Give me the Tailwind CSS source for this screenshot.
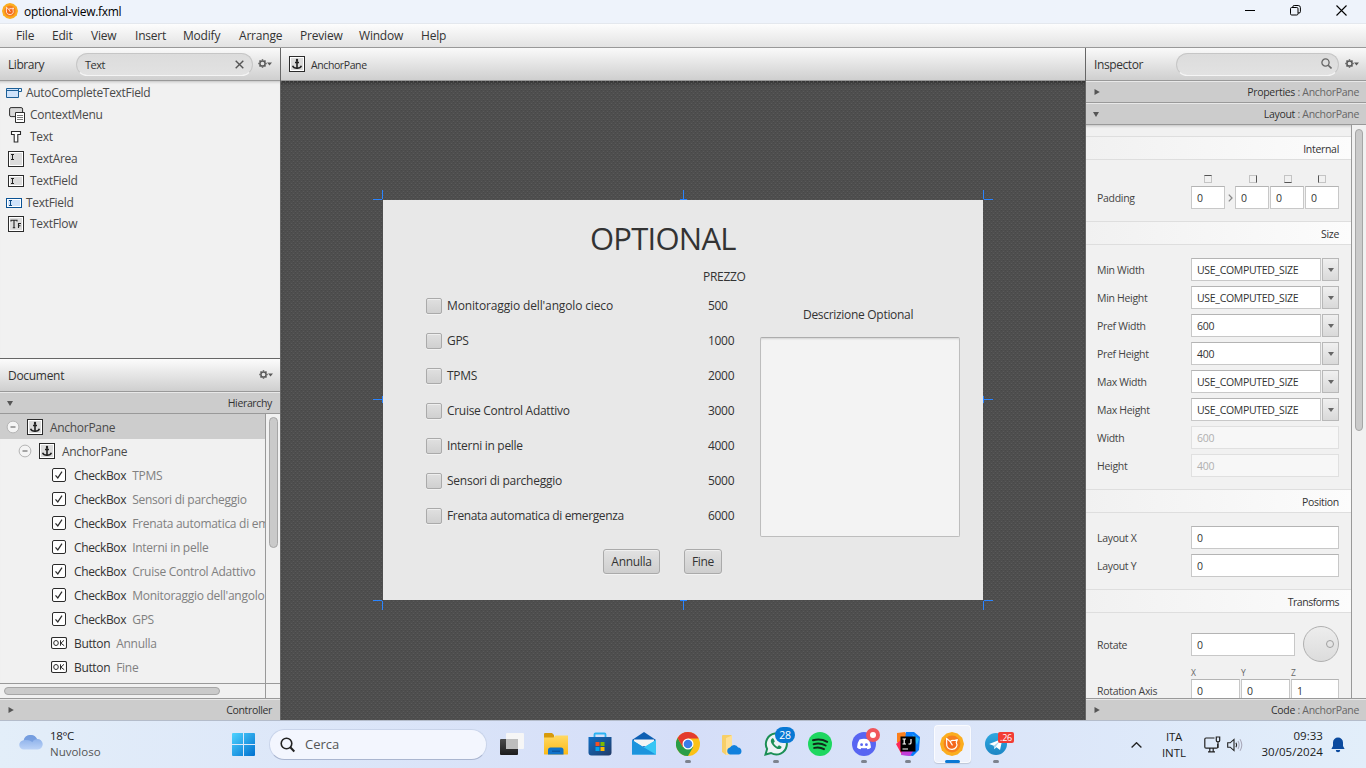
<!DOCTYPE html>
<html lang="it">
<head>
<meta charset="utf-8">
<title>optional-view.fxml</title>
<script src="https://cdn.jsdelivr.net/npm/@tailwindcss/browser@4"></script>
</head>
<body class="w-[1366px] h-[768px] overflow-hidden flex flex-col bg-[#f1f1f1] text-[12px] leading-none tracking-[-0.3px] text-[#333] font-['Open_Sans',sans-serif] whitespace-nowrap">

<svg class="absolute w-0 h-0">
  <defs>
    <linearGradient id="win" x1="0" y1="0" x2="1" y2="1"><stop offset="0" stop-color="#4fd3ff"/><stop offset="1" stop-color="#0070cf"/></linearGradient>
    <linearGradient id="cloud" x1="0" y1="0" x2="0" y2="1"><stop offset="0" stop-color="#7ea6e6"/><stop offset="1" stop-color="#bcd3f7"/></linearGradient>
    <linearGradient id="fold" x1="0" y1="0" x2="0" y2="1"><stop offset="0" stop-color="#ffd964"/><stop offset="1" stop-color="#fbb916"/></linearGradient>
    <linearGradient id="store" x1="0" y1="0" x2="1" y2="1"><stop offset="0" stop-color="#0f6fc6"/><stop offset="1" stop-color="#223a66"/></linearGradient>
    <linearGradient id="dark" x1="0" y1="0" x2="0" y2="1"><stop offset="0" stop-color="#4a4a4a"/><stop offset="1" stop-color="#1c1c1c"/></linearGradient>
    <linearGradient id="tg" x1="0" y1="0" x2="0" y2="1"><stop offset="0" stop-color="#2fa8e0"/><stop offset="1" stop-color="#1c86c4"/></linearGradient>
    <symbol id="gear" viewBox="0 0 14 10">
      <path d="M4.5 .3v1.2M4.5 7.5v1.2M.3 4.5h1.2M7.5 4.5h1.2M1.5 1.5l.9.9M6.6 6.6l.9.9M7.5 1.5l-.9.9M2.4 6.6l-.9.9" stroke="#5a5a5a" stroke-width="1.5"/>
      <circle cx="4.5" cy="4.5" r="2.6" fill="none" stroke="#5a5a5a" stroke-width="1.5"/>
      <path d="M9 3.4h5L11.5 6.4z" fill="#5a5a5a"/>
    </symbol>
    <symbol id="anchor" viewBox="0 0 16 16">
      <rect x=".5" y=".5" width="15" height="15" fill="#fff" stroke="#2b2b2b"/>
      <rect x="2" y="2" width="12" height="12" fill="#dcdcdc"/>
      <path d="M8 4v9M6 6.5h4" stroke="#222" stroke-width="1.6" fill="none"/>
      <circle cx="8" cy="4" r="1.2" fill="#222"/>
      <path d="M3.6 9.8c.5 1.7 2 2.400 4.400 2.400s3.900-.7 4.400-2.400" fill="none" stroke="#222" stroke-width="1.5"/>
    </symbol>
    <symbol id="check" viewBox="0 0 16 16">
      <rect x="1.500" y="1.500" width="13" height="13" rx="1.500" fill="#fff" stroke="#2b2b2b"/>
      <path d="M4.500 8.300l2.300 2.600L11 4.700" fill="none" stroke="#2b2b2b" stroke-width="1.200"/>
    </symbol>
    <symbol id="okbtn" viewBox="0 0 16 16">
      <rect x=".5" y="2.500" width="15" height="11" rx="1.500" fill="#fff" stroke="#2b2b2b" stroke-width="1.100"/>
      <ellipse cx="5" cy="8" rx="2.300" ry="2.500" fill="none" stroke="#2b2b2b"/>
      <path d="M9.500 5.300v5.400M13 5.300L9.900 8.200 13.200 10.700" fill="none" stroke="#2b2b2b"/>
    </symbol>
    <symbol id="minus" viewBox="0 0 14 14">
      <circle cx="7" cy="7" r="5.900" fill="#f4f4f4" stroke="#b4b4b4"/><path d="M4.500 7h5" stroke="#555" stroke-width="1"/>
    </symbol>
    <symbol id="duke" viewBox="0 0 24 24">
      <path d="M12 0L17.500 1.600 22.200 5.800 24 12 22.200 18.200 17.500 22.400 12 24 6.500 22.400 1.800 18.200 0 12 1.800 5.800 6.500 1.600z" fill="#fbad1f"/>
      <circle cx="12" cy="12" r="8.400" fill="#f6801f"/>
      <path d="M6.600 6.400l3.600 3.200c1-1 2.600-1.400 3.900-1.100l3.300-.9-1.200 2.700c1.800 3.200-.1 6.700-3.900 7-3.700.2-6-2.100-5.600-5.500z" fill="#f4661c" stroke="#fff" stroke-width="1.200" stroke-linejoin="round"/>
      <path d="M10.200 9.600l2.300 3.800" fill="none" stroke="#fff" stroke-width="1.100"/>
    </symbol>
  </defs>
</svg>

<!-- Title bar -->
<header class="h-[24px] shrink-0 flex items-center bg-[#eef3fb] text-black border-b border-[#e4e8ee]">
  <svg class="w-4 h-4 ml-[2px] mb-px"><use href="#duke"/></svg>
  <span class="ml-[6px] pt-px">optional-view.fxml</span>
  <div class="ml-auto flex items-center mr-[19px] pb-[3px]">
    <svg class="w-[11px] h-[11px]" viewBox="0 0 11 11"><path d="M0 5.500h10" stroke="#000"/></svg>
    <svg class="w-[11px] h-[11px] ml-[34px]" viewBox="0 0 11 11" fill="none" stroke="#000"><rect x=".5" y="2.500" width="7.500" height="7.500" rx="1.200"/><path d="M2.800 2.300V1.900q0-1.400 1.400-1.400h4q2.200 0 2.200 2.200v4q0 1.300-1.400 1.300H8"/></svg>
    <svg class="w-[11px] h-[11px] ml-[35px]" viewBox="0 0 11 11"><path d="M.5.500l10 10M10.500.5l-10 10" stroke="#000" stroke-width="1.100"/></svg>
  </div>
</header>

<!-- Menu bar -->
<nav class="h-[24px] shrink-0 flex items-center bg-linear-to-b from-[#fdfdfd] to-[#e3e3e3] border-b border-[#999] pl-4 pt-px tracking-[-0.2px]">
  <span class="w-9">File</span><span class="w-[39px]">Edit</span><span class="w-11">View</span><span class="w-12">Insert</span><span class="w-14">Modify</span><span class="w-[61px]">Arrange</span><span class="w-[59px]">Preview</span><span class="w-[62px]">Window</span><span>Help</span>
</nav>

<main class="flex-1 min-h-0 flex">
  <!-- Left column -->
  <aside class="w-[281px] shrink-0 flex flex-col border-r border-[#666]">
    <div class="h-[33px] shrink-0 flex items-center bg-linear-to-b from-[#fafafa] to-[#cfcfcf] border-b border-[#999] pl-2 pr-2">
      <span class="w-[68px] pt-[2px] tracking-[-0.45px]">Library</span>
      <div class="w-[177px] h-[23px] rounded-full border border-[#c6c6c6] border-b-[#f5f5f5] bg-linear-to-b from-[#dcdcdc] to-[#e2e2e2] flex items-center pl-2 pr-[8px] text-[11px] tracking-[-0.5px]">
        <span class="pt-px">Text</span>
        <svg class="ml-auto w-[9px] h-[9px]" viewBox="0 0 9 9"><path d="M.7.700l7.600 7.600M8.300.7L.7 8.300" stroke="#555" stroke-width="1.400"/></svg>
      </div>
      <svg class="w-[14px] h-[10px] ml-auto"><use href="#gear"/></svg>
    </div>
    <div id="library" class="h-[277px] shrink-0 bg-[#f1f1f1] pt-px text-[#4a4a4a] shadow-[inset_0_3px_3px_-2px_#0003]"></div>

    <div class="h-[34px] shrink-0 flex items-center bg-linear-to-b from-[#fcfcfc] to-[#cfcfcf] border-y border-t-[#666] border-b-[#999] pl-2 pr-[7px]">
      <span class="pt-[2px]">Document</span>
      <svg class="w-[14px] h-[10px] ml-auto"><use href="#gear"/></svg>
    </div>
    <div class="h-[22px] shrink-0 flex items-center bg-[#cccccc] border-t border-t-[#e8e8e8] border-b border-b-[#999] pl-[7px] pr-2">
      <svg class="w-[6px] h-[5px]" viewBox="0 0 6 5"><path d="M0 0h6L3 5z" fill="#555"/></svg>
      <span class="ml-auto text-[10.5px] tracking-[-0.35px]">Hierarchy</span>
    </div>
    <div class="h-[270px] shrink-0 flex border-b border-[#999] text-[#4a4a4a]">
      <div id="tree" class="w-[266px] overflow-hidden border-r border-[#999] shadow-[inset_0_3px_3px_-2px_#0003]"></div>
      <div class="flex-1 pl-[3px] pt-[3px]"><div class="w-[9px] h-[131px] rounded-full bg-[#cacaca] border border-[#a6a6a6]"></div></div>
    </div>
    <div class="h-[15px] shrink-0 flex border-b border-[#999]">
      <div class="w-[266px] border-r border-[#999] pl-1 pt-[3px]"><div class="w-[216px] h-[8px] rounded-full bg-[#cacaca] border border-[#a6a6a6]"></div></div>
    </div>
    <div class="flex-1 flex items-center bg-[#cccccc] border-t border-t-[#e8e8e8] pl-2 pr-2">
      <svg class="w-[6px] h-[6px]" viewBox="0 0 6 6"><path d="M.5 0v6L5.800 3z" fill="#555"/></svg>
      <span class="ml-auto text-[10.5px] tracking-[-0.35px]">Controller</span>
    </div>
  </aside>

  <!-- Canvas column -->
  <section class="w-[804px] shrink-0 flex flex-col">
    <div class="h-[33px] shrink-0 flex items-center bg-linear-to-b from-[#fafafa] to-[#cfcfcf] border-b border-[#999] pl-2 text-[10.5px] tracking-[-0.4px]">
      <svg class="w-4 h-4"><use href="#anchor"/></svg><span class="ml-[6px] pt-[2px]">AnchorPane</span>
    </div>
    <div class="flex-1 relative bg-[#4e4e4e] shadow-[inset_0_4px_4px_-2px_#0006]">
      <svg class="absolute inset-0 w-full h-full" viewBox="0 0 804 639">
        <defs><pattern id="weave" width="4" height="4" patternUnits="userSpaceOnUse" shape-rendering="crispEdges"><path d="M0 0h1v1h-1zM2 2h1v1h-1z" fill="#595959"/><path d="M0 1h1v1h-1zM2 3h1v1h-1z" fill="#484848"/></pattern></defs>
        <rect width="804" height="639" fill="url(#weave)"/>
        <path shape-rendering="crispEdges" stroke="#2a84ff" fill="none" d="M101.500 109v9M92 118.500h9M402.500 109v9M399 118.500h7M702.500 109v9M703 118.500h9M92 318.500h9M101.500 315v7M702.500 315v7M703 318.500h9M92 519.500h9M101.500 520v9M399 519.500h7M402.500 520v9M703 519.500h9M702.500 520v9"/>
      </svg>
      <!-- Edited form -->
      <div class="absolute left-[102px] top-[119px] w-[600px] h-[400px] bg-[#e8e8e8]">
        <h1 class="absolute left-[207px] top-[23px] text-[31px] tracking-[-0.75px]">OPTIONAL</h1>
        <span class="absolute left-[320px] top-[71px]">PREZZO</span>
        <div id="options" class="absolute left-[43px] top-[88px] w-[310px]"></div>
        <span class="absolute left-[420px] top-[109px]">Descrizione Optional</span>
        <div class="absolute left-[377px] top-[137px] w-[200px] h-[200px] rounded-[2px] border border-[#bdbdbd] border-t-[#adadad] bg-[#f3f3f3] shadow-[inset_0_2px_2px_-1px_#0002]"></div>
        <div class="absolute left-[220px] top-[349px] flex gap-6">
          <button class="h-[25px] w-[57px] rounded-[3px] border border-[#aaa] bg-linear-to-b from-[#e2e2e2] to-[#cecece] shadow-[inset_0_1px_0_#f0f0f0,0_1px_0_#f2f2f2]">Annulla</button>
          <button class="h-[25px] w-[38px] rounded-[3px] border border-[#aaa] bg-linear-to-b from-[#e2e2e2] to-[#cecece] shadow-[inset_0_1px_0_#f0f0f0,0_1px_0_#f2f2f2]">Fine</button>
        </div>
      </div>
    </div>
  </section>

  <!-- Inspector -->
  <aside class="flex-1 flex flex-col border-l border-[#666] text-[10.5px]">
    <div class="h-[33px] shrink-0 flex items-center bg-linear-to-b from-[#fafafa] to-[#cfcfcf] border-b border-[#999] pl-2 pr-[7px]">
      <span class="w-[82px] pt-[2px] text-[12px] tracking-[-0.4px]">Inspector</span>
      <div class="w-[163px] h-[23px] rounded-full border border-[#c6c6c6] border-b-[#f5f5f5] bg-linear-to-b from-[#dcdcdc] to-[#e2e2e2] flex items-center justify-end pr-[6px]">
        <svg class="w-[11px] h-[11px] mb-px" viewBox="0 0 11 11" fill="none" stroke="#666"><circle cx="4.500" cy="4.500" r="3.600" stroke-width="1.300"/><path d="M7.200 7.200l3.300 3.300" stroke-width="1.600"/></svg>
      </div>
      <svg class="w-[14px] h-[10px] ml-auto"><use href="#gear"/></svg>
    </div>
    <div class="h-[22px] shrink-0 flex items-center bg-[#cccccc] border-t border-t-[#e8e8e8] border-b border-b-[#999] pl-2 pr-[7px]">
      <svg class="w-[6px] h-[6px]" viewBox="0 0 6 6"><path d="M.5 0v6L5.800 3z" fill="#555"/></svg>
      <span class="ml-auto text-black/80">Properties <span class="text-[#666]">: AnchorPane</span></span>
    </div>
    <div class="h-[22px] shrink-0 flex items-center bg-[#cccccc] border-t border-t-[#e8e8e8] border-b border-b-[#999] pl-[7px] pr-[7px]">
      <svg class="w-[6px] h-[5px]" viewBox="0 0 6 5"><path d="M0 0h6L3 5z" fill="#555"/></svg>
      <span class="ml-auto text-black/80">Layout <span class="text-[#666]">: AnchorPane</span></span>
    </div>
    <div class="h-[574px] shrink-0 flex border-b border-[#999]">
      <div id="inspector" class="w-[266px] h-[573px] overflow-hidden border-r border-[#999] pt-[11px] shadow-[inset_0_3px_3px_-2px_#0003]">
        <div class="h-6 border-y border-[#dedede] bg-linear-to-r from-[#f1f1f1] to-[#fcfcfc] flex items-center justify-end pr-3 pt-[2px]">Internal</div>
        <div class="h-[61px] pl-[11px] pt-[15px]">
          <div class="flex pl-[107px] h-[11px]">
            <div class="w-[8px] h-[8px] border border-[#c4c4c4] border-t-[#555]"></div>
            <div class="w-[8px] h-[8px] border border-[#c4c4c4] border-r-[#555] ml-[37px]"></div>
            <div class="w-[8px] h-[8px] border border-[#c4c4c4] border-b-[#555] ml-[27px]"></div>
            <div class="w-[8px] h-[8px] border border-[#c4c4c4] border-l-[#555] ml-[26px]"></div>
          </div>
          <div class="flex items-center">
            <span class="w-[94px] text-[#444] pt-[2px]">Padding</span>
            <div class="w-[34px] h-[23px] border border-[#c8c8c8] border-t-[#b4b4b4] bg-white flex items-center pl-[5px] pt-[2px]">0</div>
            <svg class="w-[5px] h-[8px] mx-[2.5px]" viewBox="0 0 5 8"><path d="M.8.600L4 4 .8 7.400" fill="none" stroke="#888" stroke-width="1.300"/></svg>
            <div class="w-[34px] h-[23px] border border-[#c8c8c8] border-t-[#b4b4b4] bg-white flex items-center pl-[5px] pt-[2px]">0</div>
            <div class="w-[34px] h-[23px] border border-[#c8c8c8] border-t-[#b4b4b4] bg-white flex items-center pl-[5px] pt-[2px] ml-px">0</div>
            <div class="w-[34px] h-[23px] border border-[#c8c8c8] border-t-[#b4b4b4] bg-white flex items-center pl-[5px] pt-[2px] ml-px">0</div>
          </div>
        </div>
        <div class="h-6 border-y border-[#dedede] bg-linear-to-r from-[#f1f1f1] to-[#fcfcfc] flex items-center justify-end pr-3 pt-[2px]">Size</div>
        <div id="size" class="h-[244px] pl-[11px] pt-[13px] flex flex-col gap-[5px]"></div>
        <div class="h-6 border-y border-[#dedede] bg-linear-to-r from-[#f1f1f1] to-[#fcfcfc] flex items-center justify-end pr-3 pt-[2px]">Position</div>
        <div id="position" class="h-[76px] pl-[11px] pt-[13px] flex flex-col gap-[5px]"></div>
        <div class="h-6 border-y border-[#dedede] bg-linear-to-r from-[#f1f1f1] to-[#fcfcfc] flex items-center justify-end pr-3 pt-[2px] tracking-[-0.5px]">Transforms</div>
        <div class="pl-[11px] pt-[13px]">
          <div class="flex items-center">
            <span class="w-[94px] text-[#444] pt-[3px]">Rotate</span>
            <div class="w-[104px] h-[23px] border border-[#c8c8c8] border-t-[#b4b4b4] bg-white flex items-center pl-[5px] pt-[2px] mt-px">0</div>
            <div class="w-9 h-9 ml-2 rounded-full border border-[#b0b0b0] bg-linear-to-b from-[#ededed] to-[#dcdcdc] flex items-center justify-end pr-1"><div class="w-2 h-2 rounded-full border border-[#a0a0a0]"></div></div>
          </div>
          <div class="flex pl-[94px] pt-[7px] text-[8.5px] text-[#666] h-[17px]"><span class="w-[50px]">X</span><span class="w-[50px]">Y</span><span>Z</span></div>
          <div class="flex items-center">
            <span class="w-[94px] text-[#444] pt-[2px]">Rotation Axis</span>
            <div class="w-[49px] h-[23px] border border-[#c8c8c8] border-t-[#b4b4b4] bg-white flex items-center pl-[5px] pt-[2px] mr-px">0</div>
            <div class="w-[49px] h-[23px] border border-[#c8c8c8] border-t-[#b4b4b4] bg-white flex items-center pl-[5px] pt-[2px] mr-px">0</div>
            <div class="w-[48px] h-[23px] border border-[#c8c8c8] border-t-[#b4b4b4] bg-white flex items-center pl-[5px] pt-[2px]">1</div>
          </div>
        </div>
      </div>
      <div class="flex-1 pl-[3px] pt-[4px]"><div class="w-[8px] h-[302px] rounded-full bg-[#cacaca] border border-[#a6a6a6]"></div></div>
    </div>
    <div class="flex-1 flex items-center bg-[#cccccc] border-t border-t-[#e8e8e8] pl-2 pr-[7px]">
      <svg class="w-[6px] h-[6px]" viewBox="0 0 6 6"><path d="M.5 0v6L5.800 3z" fill="#555"/></svg>
      <span class="ml-auto text-black/80">Code <span class="text-[#666]">: AnchorPane</span></span>
    </div>
  </aside>
</main>

<!-- Taskbar -->
<footer class="h-12 shrink-0 flex items-center border-t border-[#b4bcca] bg-linear-to-r from-[#e3eef9] via-[#d5def8] to-[#e2eefa] text-[#1b1b1b]">
  <svg class="w-[24px] h-[16px] ml-[19px] mb-[5px]" viewBox="0 0 24 16"><path d="M5 15.500a4.600 4.600 0 0 1-.3-9.200A7.200 7.200 0 0 1 18 4.900a5.300 5.300 0 0 1 .8 10.600z" fill="url(#cloud)"/><path d="M4.700 6.300A7.200 7.200 0 0 1 18 4.900c-3 .2-4 1.700-4.700 3.400-2-2.300-5.300-2.900-8.600-2z" fill="#6e97dc" opacity=".7"/></svg>
  <div class="w-[188px] pl-[7px] pb-[2px] flex flex-col gap-[4px] text-[11.5px]"><span class="tracking-[-0.35px]">18°C</span><span class="text-[#555] tracking-[0]">Nuvoloso</span></div>
  <svg class="w-[23px] h-[23px] ml-px" viewBox="0 0 23 23"><path d="M0 1q0-1 1-1h10v11H0zM12 0h10q1 0 1 1v10H12zM0 12h11v11H1q-1 0-1-1zM12 12h11v10q0 1-1 1H12z" fill="url(#win)"/></svg>
  <div class="w-[218px] h-[31px] ml-[14px] rounded-full bg-[#f3f6fe] border border-[#c9d4ea] border-b-[#aab6d0] flex items-center pl-[10px]">
    <svg class="w-[16px] h-[16px]" viewBox="0 0 16 16" fill="none" stroke="#222"><circle cx="6.500" cy="6.500" r="5.300" stroke-width="1.600"/><path d="M10.300 10.300l4 4.200" stroke-width="2"/></svg>
    <span class="ml-[9px] text-[13px] tracking-[0] text-[#555]">Cerca</span>
  </div>
  <div class="flex h-full ml-[3px]">
    <div class="w-11 flex justify-center pt-[11px]"><svg class="w-6 h-6" viewBox="0 0 24 24"><rect x="0" y="7" width="18" height="16" rx="1" fill="url(#dark)"/><rect x="6" y="1" width="18" height="16" rx="1" fill="#f6f6f6"/><rect x="6" y="7" width="12" height="10" fill="#bdbdbd"/></svg></div>
    <div class="w-11 flex justify-center pt-[11px]"><svg class="w-6 h-6" viewBox="0 0 24 24"><path d="M0 2q0-1 1-1h7l2 2v4H0z" fill="#d79a0b"/><path d="M0 5.500h9.500L11.500 3.500H24V22q0 .5-1 .5H1q-1 0-1-.5z" fill="url(#fold)"/><path d="M4 22.500V18q0-2.500 2.500-2.500h10.500q2.500 0 2.500 2.500v4.500z" fill="#0f72c8"/><path d="M8 19.200h8" stroke="#0a5199" stroke-width="1.200"/></svg></div>
    <div class="w-11 flex justify-center pt-[11px]"><svg class="w-6 h-6" viewBox="0 0 24 24"><path d="M6.500 6V2.500q0-1 1-1h9q1 0 1 1V6" fill="none" stroke="#2bb3f3" stroke-width="1.800"/><path d="M.5 5h23v15.500q0 3-3 3h-17q-3 0-3-3z" fill="url(#store)"/><path d="M7.500 10h4v4h-4z" fill="#f25022"/><path d="M12.500 10h4v4h-4z" fill="#7fba00"/><path d="M7.500 15h4v4h-4z" fill="#00a4ef"/><path d="M12.500 15h4v4h-4z" fill="#ffb900"/></svg></div>
    <div class="w-11 flex justify-center pt-[11px]"><svg class="w-6 h-6" viewBox="0 0 24 24"><path d="M0 8L12 0l12 8-12 7z" fill="#0d5fb3"/><path d="M2 7.500h20V14H2z" fill="#f4f4f4"/><path d="M0 8l12 7.500L24 8v14.500H0z" fill="#2ab1ee"/><path d="M12 15.500L24 22.500H0V8z" fill="#1c94dd"/><path d="M12 15.300L24 8v14.500z" fill="#38c6f4"/></svg></div>
    <div class="w-11 flex flex-col items-center pt-[11px]"><svg class="w-6 h-6" viewBox="0 0 24 24"><circle cx="12" cy="12" r="12" fill="#fbc116"/><path d="M1.600 6A12 12 0 0 0 12 24l5.200-9H12L6.800 15z" fill="#2a9d48"/><path d="M12 6.500H22.600A12 12 0 0 0 1.600 6l5.200 9z" fill="#e33b2e"/><circle cx="12" cy="12" r="5.500" fill="#fff"/><circle cx="12" cy="12" r="4.300" fill="#3b7de9"/></svg><i class="w-[6px] h-[3px] mt-1 rounded-full bg-[#7d838e]"></i></div>
    <div class="w-11 flex justify-center pt-[13px]"><svg class="w-[22px] h-[22px]" viewBox="0 0 22 22"><path d="M1 1.500Q1 1 2 1h8.500v18L5 21 1 18z" fill="#f7cf68"/><path d="M5 4l6-2.500V20L5 21z" fill="#ffe095"/><path d="M9 20.500a3.600 3.600 0 0 1 0-7 4.600 4.600 0 0 1 8.200 0 3.600 3.600 0 0 1 .8 7z" fill="#1180dd"/></svg></div>
    <div class="w-11 relative flex flex-col items-center pt-[11px]"><svg class="w-6 h-6" viewBox="0 0 24 24"><path d="M1.500 22.500l1.600-5.600A10.500 10.500 0 1 1 7 21z" fill="#eef3f6" stroke="#1c8f56" stroke-width="2"/><path d="M8 6.500c-1.800 1.300-1.600 3.600.6 6.400 2.600 3.200 5.600 5 7.800 3.900 1.200-.7 1.300-1.900.9-2.300l-2.400-1.300-1.300 1.500c-1.700-.6-3.200-2-4-3.800l1.200-1.400-1.100-2.600c-.3-.6-1.100-.8-1.700-.4z" fill="#1c8f56"/></svg><i class="w-[6px] h-[3px] mt-1 rounded-full bg-[#7d838e]"></i><b class="absolute left-[21px] top-[6px] w-5 h-4 rounded-full bg-[#0878d4] text-white font-normal text-[10.5px] flex items-center justify-center">28</b></div>
    <div class="w-11 flex justify-center pt-[11px]"><svg class="w-6 h-6" viewBox="0 0 24 24"><circle cx="12" cy="12" r="12" fill="#1ed760"/><path d="M5 8.300c5-1.400 10-.8 14.200 1.500M5.600 12.200c4.200-1.200 8.400-.7 12 1.300M6.200 15.900c3.500-.9 6.800-.5 9.800 1.200" fill="none" stroke="#10291a" stroke-width="2" stroke-linecap="round"/></svg></div>
    <div class="w-11 relative flex flex-col items-center pt-[11px]"><svg class="w-6 h-6" viewBox="0 0 24 24"><circle cx="12" cy="12" r="12" fill="#5865f2"/><path d="M7.500 7.500Q12 6 16.500 7.500 19 11 19 15.500 17.500 17 15.400 17.300l-.8-1.400q-2.600.7-5.200 0l-.8 1.400Q6.500 17 5 15.500 5 11 7.500 7.500z" fill="#fff"/><circle cx="9.600" cy="12.700" r="1.400" fill="#5865f2"/><circle cx="14.400" cy="12.700" r="1.400" fill="#5865f2"/></svg><i class="w-[6px] h-[3px] mt-1 rounded-full bg-[#7d838e]"></i><b class="absolute left-[24px] top-[7px] w-[14px] h-[14px] rounded-full bg-[#f0555a] flex items-center justify-center"><i class="w-[6px] h-[6px] rounded-full bg-white"></i></b></div>
    <div class="w-11 flex flex-col items-center pt-[11px]"><svg class="w-6 h-6" viewBox="0 0 24 24"><path d="M1 1l8-1 3 5-8 8-3-3z" fill="#fc801d"/><path d="M0 12l6-5 4 12-4 4z" fill="#fe2857"/><path d="M10 0h8l6 5-1 13-6 6-10-1z" fill="#087cfa"/><path d="M6 18h12l-4 6-9-1z" fill="#c33dd8"/><path d="M16 2l7 5-2 6z" fill="#21b7f5"/><path d="M4.500 4.500h15v15h-15z" fill="#000"/><path d="M6.500 7h3.500M8.200 7v5M6.500 12h3.500M15 7v3.700q0 1.300-1.300 1.300h-1.200M6.500 17h5.500" fill="none" stroke="#fff" stroke-width="1.200"/></svg><i class="w-[6px] h-[3px] mt-1 rounded-full bg-[#7d838e]"></i></div>
    <div class="w-11 flex flex-col items-center pt-[4px]"><div class="w-[37px] h-[38px] rounded-[4px] bg-[#edf1fc] border border-white/70 flex flex-col items-center pt-[6px] shadow-[0_1px_1px_#0002]"><svg class="w-6 h-6 shrink-0"><use href="#duke"/></svg><i class="w-[15px] h-[3px] mt-1 shrink-0 rounded-full bg-[#0a78d4]"></i></div></div>
    <div class="w-11 relative flex flex-col items-center pt-[12px]"><svg class="w-[22px] h-[22px]" viewBox="0 0 24 24"><circle cx="12" cy="12" r="12" fill="url(#tg)"/><path d="M4.500 12L19 6.200l-2.600 12.300-4-3-2.200 2.300-.6-4z" fill="#fff"/><path d="M9.600 13.800L17 8l-5 6.500-1.800 3z" fill="#a9d6ee"/></svg><i class="w-[6px] h-[3px] mt-[5px] rounded-full bg-[#7d838e]"></i><b class="absolute left-[24px] top-[11px] w-[16px] h-[11px] rounded-[2px] bg-[#f23c34] text-white font-normal text-[9px] flex items-center justify-center">.26</b></div>
  </div>
  <div class="ml-auto flex items-center pr-[21px] text-[11.5px] tracking-[-0.2px]">
    <svg class="w-[11px] h-[6px]" viewBox="0 0 11 6"><path d="M.6 5.500l4.900-4.800 4.900 4.800" fill="none" stroke="#222" stroke-width="1.300"/></svg>
    <div class="ml-[18px] w-[28px] flex flex-col gap-[5px] items-center"><span>ITA</span><span class="tracking-[0]">INTL</span></div>
    <svg class="w-[17px] h-[17px] ml-[16px]" viewBox="0 0 17 17" fill="none" stroke="#222" stroke-width="1.200"><path d="M10.500 2H2Q.8 2 .8 3.200V11q0 1.200 1.200 1.200h10.500q1.200 0 1.200-1.200V8M4 15.800h7M5.800 12.500v3M9.200 12.500v3"/><path d="M12.300 1h3.400v3.500q0 1.300-1.700 1.300t-1.700-1.300zM14 6v6"/></svg>
    <svg class="w-[16px] h-[14px] ml-[6px]" viewBox="0 0 16 14" fill="none" stroke="#222" stroke-width="1.100"><path d="M.7 4.800h2.500L7 1.400v11.200L3.200 9.200H.7z"/><path d="M9 4.800q1.200 2.200 0 4.400"/><path d="M11 3q2.200 4 0 8M13 1.200q3.600 5.800 0 11.600" stroke="#aab"/></svg>
    <div class="ml-[17px] pb-[2px] w-[63px] flex flex-col gap-[5px] items-end tracking-[0.05px]"><span>09:33</span><span>30/05/2024</span></div>
    <svg class="w-[14px] h-[16px] ml-2" viewBox="0 0 14 16"><path d="M7 .5a5 5 0 0 1 5 5V9l1.600 3H.4L2 9V5.500a5 5 0 0 1 5-5zM4.800 13h4.400a2.200 2.200 0 0 1-4.400 0z" fill="#0b4a9e"/></svg>
  </div>
</footer>

<script>
const fill = (id, html) => { document.getElementById(id).innerHTML = html; };

const libIcons = {
  auto: '<g fill="#cfe3fb" stroke="#1c5f96"><path d="M10.5 3.5h5v3h-5z" fill="#f4f8fd"/><path d="M.5 3.5h12v9H.5z"/><path d="M.5 5.5h12" /></g>',
  menu: '<rect x=".6" y=".6" width="13" height="9" rx="1.5" fill="#d8d8d8" stroke="#2b2b2b"/><path d="M6.5 5.5h9v10h-9z" fill="#fff" stroke="#2b2b2b"/><path d="M8 8.5h6M8 10.5h6M8 12.5h6" stroke="#777"/>',
  text: '<path d="M2.5 2.5h9v3H8.8v7.5H5.2V5.5H2.5z" fill="#fff" stroke="#2b2b2b" stroke-width="1.1"/>',
  area: '<rect x=".5" y=".5" width="15" height="15" fill="#fff" stroke="#2b2b2b"/><path d="M2 2h12v12H2z" fill="#dcdcdc"/><path d="M3 3.5h3M4.5 3.5v5M3 8.5h3" stroke="#222"/>',
  field: '<rect x=".5" y="2.5" width="15" height="11" fill="#fff" stroke="#2b2b2b"/><path d="M2 4h12v8H2z" fill="#dcdcdc"/><path d="M3 5.5h3M4.5 5.5v5M3 10.5h3" stroke="#222"/>',
  blue: '<rect x=".5" y="3.5" width="15" height="9" fill="#fff" stroke="#0b5394"/><path d="M2 5h12v6H2z" fill="#cfe3fb"/><path d="M3 5.5h3M4.5 5.5v5M3 10.5h3" stroke="#0b4a86"/>',
  flow: '<rect x=".5" y=".5" width="15" height="15" fill="#fff" stroke="#2b2b2b"/><path d="M2 2h12v12H2z" fill="#dcdcdc"/><path d="M3 5.5V4.3h6v1.2M6 4.3v7.2M4.8 11.7h2.4M10.5 12V7.5H13M10.5 9.7h2" fill="none" stroke="#222" stroke-width="1.1"/>'
};
fill('library', [
  ['auto', 'AutoCompleteTextField', 'ml-[6px] mr-[4px]'], ['menu', 'ContextMenu', 'ml-[9px] mr-[5px]'], ['text', 'Text', 'ml-[9px] mr-[5px]'],
  ['area', 'TextArea', 'ml-[8px] mr-[6px] mb-px'], ['field', 'TextField', 'ml-[8px] mr-[6px] mb-px'], ['blue', 'TextField', 'ml-[6px] mr-[4px] mb-px'], ['flow', 'TextFlow', 'ml-[8px] mr-[6px] mb-[3px]', 'pb-[2px]']
].map(([k, t, m, p = '']) => `<div class="h-[22px] flex items-center"><svg class="w-4 h-4 ${m}" viewBox="0 0 16 16">${libIcons[k]}</svg><span class="${p}">${t}</span></div>`).join(''));

const pane = cls => `<div class="flex items-center ${cls}"><svg class="w-[14px] h-[14px]"><use href="#minus"/></svg><svg class="w-4 h-4 ml-[7px] mr-[7px]"><use href="#anchor"/></svg><span class="pt-[2px]">AnchorPane</span></div>`;
fill('tree', pane('h-[25px] pl-[6px] bg-[#cdcdcd]') + pane('h-6 pl-[18px]') + [
  ['check', 'CheckBox', 'TPMS'], ['check', 'CheckBox', 'Sensori di parcheggio'], ['check', 'CheckBox', 'Frenata automatica di emergenza'],
  ['check', 'CheckBox', 'Interni in pelle'], ['check', 'CheckBox', 'Cruise Control Adattivo'], ['check', 'CheckBox', "Monitoraggio dell'angolo cieco"],
  ['check', 'CheckBox', 'GPS'], ['okbtn', 'Button', 'Annulla'], ['okbtn', 'Button', 'Fine']
].map(([i, a, b]) => `<div class="h-6 flex items-center pl-[51px]"><svg class="w-4 h-4 shrink-0 mr-[7px] mb-px"><use href="#${i}"/></svg><span class="text-[#333] tracking-[-0.35px] pt-[2px]">${a}</span><span class="ml-[6px] pt-[2px] text-[#808080] tracking-[-0.27px]">${b}</span></div>`).join(''));

fill('options', [["Monitoraggio dell'angolo cieco", 500, 'tracking-[-0.14px]'], ['GPS', 1000], ['TPMS', 2000], ['Cruise Control Adattivo', 3000], ['Interni in pelle', 4000], ['Sensori di parcheggio', 5000, 'tracking-[-0.25px]'], ['Frenata automatica di emergenza', 6000, 'tracking-[-0.36px]']]
.map(([t, p, k = 'tracking-[-0.3px]']) => `<div class="h-[35px] flex items-center"><div class="w-4 h-4 rounded-[2px] border border-[#aaa] bg-linear-to-b from-[#e0e0e0] to-[#d0d0d0] shadow-[inset_0_1px_0_#eee,0_1px_0_#f2f2f2]"></div><span class="ml-[5px] w-[261px] ${k}">${t}</span><span>${p}</span></div>`).join(''));

const field = (label, value, kind) => `<div class="flex items-center h-[23px]"><span class="w-[94px] text-[#444] pt-[2px]">${label}</span>` + (
  kind === 'combo'
    ? `<div class="w-[130px] h-[23px] border border-[#c8c8c8] border-t-[#b4b4b4] bg-white flex items-center pl-[5px] pt-[2px]">${value}</div><div class="w-[17px] h-[23px] ml-px border border-[#b8b8b8] bg-linear-to-b from-[#f0f0f0] to-[#d9d9d9] flex items-center justify-center"><svg class="w-[6px] h-[4px]" viewBox="0 0 6 4"><path d="M0 0h6L3 4z" fill="#666"/></svg></div>`
  : kind === 'off'
    ? `<div class="w-[148px] h-[23px] border border-[#e0e0e0] bg-[#f7f7f7] text-[#b0b0b0] flex items-center pl-[5px] pt-[2px]">${value}</div>`
    : `<div class="w-[148px] h-[23px] border border-[#c8c8c8] border-t-[#b4b4b4] bg-white flex items-center pl-[5px] pt-[2px]">${value}</div>`) + '</div>';
const C = 'USE_COMPUTED_SIZE';
fill('size', [['Min Width', C, 'combo'], ['Min Height', C, 'combo'], ['Pref Width', '600', 'combo'], ['Pref Height', '400', 'combo'], ['Max Width', C, 'combo'], ['Max Height', C, 'combo'], ['Width', '600', 'off'], ['Height', '400', 'off']].map(a => field(...a)).join(''));
fill('position', field('Layout X', '0') + field('Layout Y', '0'));
</script>
</body>
</html>
